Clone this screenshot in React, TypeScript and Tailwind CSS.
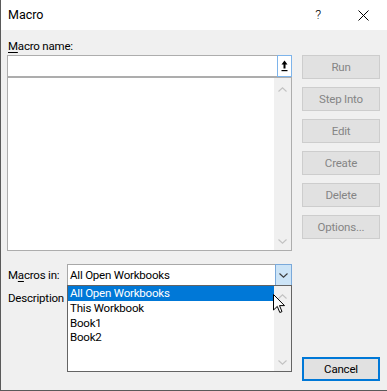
import React from "react";

const Chevron = ({ up, dark }: { up?: boolean; dark?: boolean }) => (
  <svg width="9" height="5" viewBox="0 0 9 5" className="block">
    <path
      d={up ? "M0.5 4.5 L4.5 0.8 L8.5 4.5" : "M0.5 0.5 L4.5 4.2 L8.5 0.5"}
      fill="none"
      stroke={dark ? "#3b3b3b" : "#c2c2c2"}
      strokeWidth="1.1"
    />
  </svg>
);

const Btn = ({ label, primary }: { label: string; primary?: boolean }) => (
  <div
    className={
      primary
        ? "h-[24px] w-[78px] flex items-center justify-center bg-[#e1e1e1] border-2 border-[#0078d7] text-black"
        : "h-[24px] w-[78px] flex items-center justify-center bg-[#e1e1e1] border border-[#cdcdcd] text-[#858585]"
    }
  >
    {label}
  </div>
);

export default function App() {
  return (
    <div className="relative w-[387px] h-[391px] bg-[#f0f0f0] border-l border-b border-[#5a5a5a] text-[11.5px] tracking-[-0.2px] leading-[16px] text-black overflow-hidden font-['Roboto',sans-serif]">
      {/* Title bar */}
      <div className="h-[30px] bg-white flex items-center pl-[7px]">
        <span className="text-[12.5px] tracking-normal">Macro</span>
        <span className="ml-auto mr-[37px] text-[13px] font-light">?</span>
        <svg width="11" height="11" viewBox="0 0 11 11" className="mr-[18px]">
          <path d="M0.5 0.5 L10.5 10.5 M10.5 0.5 L0.5 10.5" stroke="#000" strokeWidth="1" />
        </svg>
      </div>

      {/* Body */}
      <div className="flex pl-[6px]">
        {/* Left column */}
        <div className="w-[285px] flex flex-col">
          <div className="mt-[8px] h-[16px] pl-[1px]">
            <span className="underline underline-offset-2">M</span>acro name:
          </div>
          <div className="mt-[1px] h-[22px] bg-white border border-[#adadad] flex justify-end">
            <div className="w-[15px] h-[22px] -mt-[1px] -mr-[1px] border border-[#7eb4ea] bg-white flex items-center justify-center">
              <svg width="7" height="12" viewBox="0 0 7 12">
                <path d="M3.5 0.5 L6.5 4.5 L4.5 4.5 L4.5 8.5 L2.5 8.5 L2.5 4.5 L0.5 4.5 Z" fill="#000" />
                <rect x="0.5" y="10" width="6" height="1.2" fill="#000" />
              </svg>
            </div>
          </div>
          <div className="h-[174px] bg-white border border-[#adadad] flex justify-end">
            <div className="w-[17px] bg-[#f0f0f0] flex flex-col items-center justify-between pt-[9px] pb-[6px]">
              <Chevron up />
              <Chevron />
            </div>
          </div>

          <div className="mt-[13px] flex items-center h-[22px]">
            <div className="w-[60px] pl-[1px]">
              M<span className="underline underline-offset-2">a</span>cros in:
            </div>
            <div className="flex-1 h-[22px] bg-white border border-[#a8a8a8] flex items-center">
              <span className="pl-[2px]">All Open Workbooks</span>
              <div className="ml-auto w-[17px] h-[22px] -mr-[1px] border border-[#7aa9da] bg-[#cce4f7] flex items-center justify-center">
                <Chevron dark />
              </div>
            </div>
          </div>
          <div className="mt-[4px] pl-[1px] h-[16px]">Description</div>
        </div>

        {/* Right column */}
        <div className="ml-[10px] flex flex-col gap-[8px] pt-[25px]">
          <Btn label="Run" />
          <Btn label="Step Into" />
          <Btn label="Edit" />
          <Btn label="Create" />
          <Btn label="Delete" />
          <Btn label="Options..." />
        </div>
      </div>

      {/* Cancel button */}
      <div className="absolute left-[301px] top-[357px]">
        <Btn label="Cancel" primary />
      </div>

      {/* Dropdown list popup */}
      <div className="absolute left-[66px] top-[285px] w-[225px] h-[87px] bg-white border border-[#646464] flex">
        <div className="flex-1 flex flex-col">
          <div className="h-[15px] bg-[#0078d7] text-white pl-[2px] leading-[15px]">All Open Workbooks</div>
          <div className="h-[14.5px] pl-[2px] leading-[14.5px]">This Workbook</div>
          <div className="h-[14.5px] pl-[2px] leading-[14.5px]">Book1</div>
          <div className="h-[14.5px] pl-[2px] leading-[14.5px]">Book2</div>
        </div>
        <div className="w-[17px] bg-[#f0f0f0] flex flex-col items-center justify-between pt-[8px] pb-[6px]">
          <Chevron up />
          <Chevron />
        </div>
      </div>

      {/* Mouse cursor */}
      <svg className="absolute left-[272px] top-[294px]" width="13" height="20" viewBox="0 0 13 20">
        <path
          d="M0.5 0.5 L0.5 16 L4.3 12.4 L6.8 18.5 L9 17.6 L6.5 11.6 L11.5 11.6 Z"
          fill="#fff"
          stroke="#000"
          strokeWidth="1"
        />
      </svg>
    </div>
  );
}
